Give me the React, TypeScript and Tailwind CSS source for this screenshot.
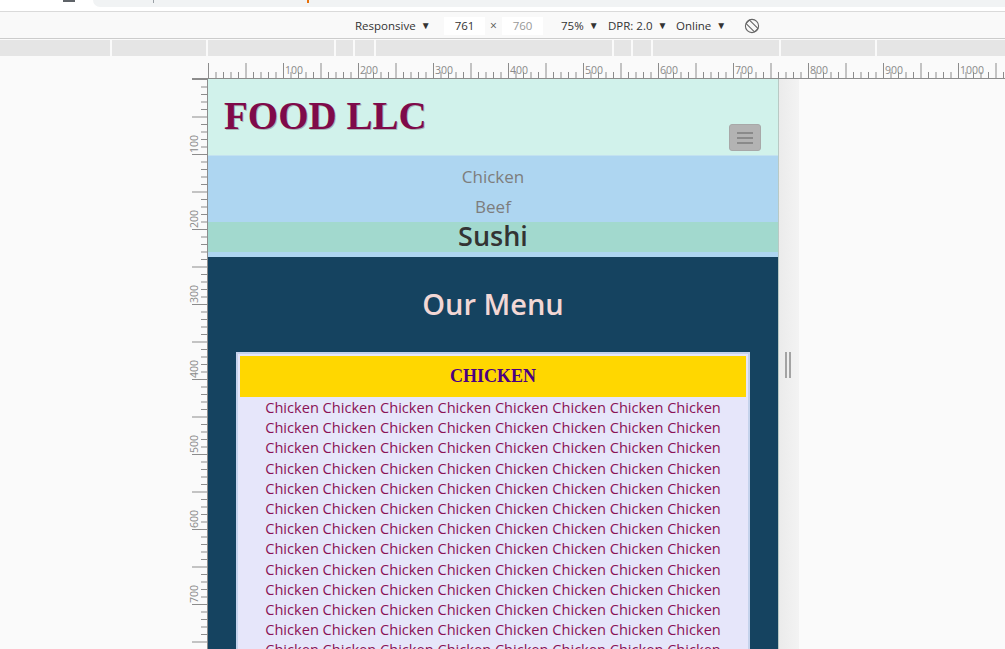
import React from "react";

const SANS = { fontFamily: '"Open Sans", "Noto Sans", sans-serif' } as const;

function HRuler() {
  const ticks: React.ReactNode[] = [];
  for (let i = 0; 208 + i * 7.5 <= 1005; i++) {
    const x = 208 + i * 7.5 + 0.5;
    const long = i % 5 === 0;
    ticks.push(
      <line key={"t" + i} x1={x} x2={x} y1={long ? 7 : 16} y2={23} stroke="#8c8c8c" strokeWidth={1} />
    );
    if (i % 10 === 0 && i > 0) {
      ticks.push(
        <text key={"l" + i} x={x + 1.5} y={18} fontSize={10.5} fill="#8a8a8a" fontFamily='"Open Sans", sans-serif'>
          {i * 10}
        </text>
      );
    }
  }
  return (
    <svg width={1005} height={23} className="block">
      <line x1={192} x2={1005} y1={22.5} y2={22.5} stroke="#8c8c8c" strokeWidth={1} />
      {ticks}
    </svg>
  );
}

function VRuler() {
  const ticks: React.ReactNode[] = [];
  for (let i = 0; i * 7.5 <= 570; i++) {
    const y = i * 7.5 + 0.5;
    const long = i % 5 === 0;
    ticks.push(
      <line key={"t" + i} x1={long ? 4 : 13} x2={20} y1={y} y2={y} stroke="#8c8c8c" strokeWidth={1} />
    );
    if (i % 10 === 0 && i > 0) {
      ticks.push(
        <text
          key={"l" + i}
          transform={`translate(10, ${y - 1.5}) rotate(-90)`}
          fontSize={10.5}
          fill="#8a8a8a"
          fontFamily='"Open Sans", sans-serif'
        >
          {i * 10}
        </text>
      );
    }
  }
  return (
    <svg width={20} height={570} className="block">
      <line x1={19.5} x2={19.5} y1={0} y2={570} stroke="#8c8c8c" strokeWidth={1} />
      {ticks}
    </svg>
  );
}

function RotateIcon() {
  return (
    <svg width={16} height={16} viewBox="0 0 16 16" fill="none" stroke="#666" strokeWidth={1.1}>
      <circle cx={8} cy={8} r={6.6} />
      <rect x={5.6} y={2} width={4.8} height={12} rx={0.8} transform="rotate(-45 8 8)" />
    </svg>
  );
}

const Arrow = () => <span className="text-[10px] ml-[5px] text-[#333] relative top-[-1px]">▼</span>;

export default function App() {
  const segs = [110, 94, 126, 17, 19, 236, 17, 18, 126, 94, 128];
  const line = Array(8).fill("Chicken").join(" ");
  return (
    <div className="w-[1005px] h-[649px] overflow-hidden bg-[#fafafa] flex flex-col" style={SANS}>
      {/* browser top strip */}
      <div className="h-[11px] bg-white flex items-start shrink-0">
        <div className="w-[63px]" />
        <div className="w-[12px] h-[2px] bg-[#5f6368]" />
        <div className="w-[18px]" />
        <div className="flex-1 h-[7px] bg-[#f1f3f4] rounded-bl-[9px] flex items-start">
          <div className="w-[60px]" />
          <div className="w-[1px] h-[3px] bg-[#9aa0a6]" />
          <div className="w-[153px]" />
          <div className="w-[2px] h-[3px] bg-[#e8710a]" />
        </div>
      </div>
      <div className="h-[1px] bg-[#dadada] shrink-0" />
      {/* device toolbar */}
      <div className="h-[26px] bg-[#f9f9f9] flex items-center pt-[2px] pl-[355px] text-[11.5px] text-[#333] shrink-0">
        <div className="w-[89px] flex items-center">
          <span>Responsive</span>
          <Arrow />
        </div>
        <div className="w-[41px] h-[18px] bg-white flex items-center justify-center">761</div>
        <div className="w-[17px] flex items-center justify-center text-[#555] text-[12px]">×</div>
        <div className="w-[41px] h-[18px] bg-white flex items-center justify-center text-[#999]">760</div>
        <div className="w-[18px]" />
        <div className="w-[47px] flex items-center">
          <span>75%</span>
          <Arrow />
        </div>
        <div className="w-[68px] flex items-center">
          <span>DPR: 2.0</span>
          <Arrow />
        </div>
        <div className="w-[68px] flex items-center">
          <span>Online</span>
          <Arrow />
        </div>
        <RotateIcon />
      </div>
      <div className="h-[1px] bg-[#cccccc] shrink-0" />
      <div className="h-[1px] bg-[#fafafa] shrink-0" />
      {/* media query bar */}
      <div className="h-[16px] flex gap-[2px] shrink-0">
        {segs.map((w, i) => (
          <div key={i} className="h-full bg-[#e5e5e5]" style={{ width: w }} />
        ))}
      </div>
      {/* horizontal ruler */}
      <div className="h-[23px] shrink-0">
        <HRuler />
      </div>
      {/* main */}
      <div className="flex h-[570px] shrink-0">
        <div className="w-[188px] shrink-0" />
        <div className="w-[20px] shrink-0">
          <VRuler />
        </div>
        {/* device page */}
        <div className="w-[571px] shrink-0 flex flex-col overflow-hidden border-r border-[#b9c9c4]">
          <header className="h-[76px] shrink-0 bg-[#d1f2eb] flex justify-between items-start">
            <div
              className="pl-[16px] pt-[17px] text-[39px] leading-[39px] font-bold text-[#7f0a4a] [text-shadow:1px_1px_0_rgba(40,0,20,0.25)]"
              style={{ fontFamily: '"Liberation Serif", "Times New Roman", serif' }}
            >
              FOOD LLC
            </div>
            <div className="mt-[45px] mr-[17px] w-[32px] h-[27px] bg-[#b3b3b3] border border-[#a8a8a8] rounded-[3px] flex flex-col items-center justify-center gap-[3px]">
              <div className="w-[16px] h-[2px] bg-[#8a8a8a]" />
              <div className="w-[16px] h-[2px] bg-[#8a8a8a]" />
              <div className="w-[16px] h-[2px] bg-[#8a8a8a]" />
            </div>
          </header>
          <nav className="shrink-0 bg-[#aed6f1] pt-[6px] pb-[5px] border-t border-[#c3e2f0] flex flex-col text-center">
            <div className="h-[30px] leading-[29px] text-[17px] text-[#7d7d7d]">Chicken</div>
            <div className="h-[30px] leading-[29px] text-[17px] text-[#7d7d7d]">Beef</div>
            <div className="h-[30px] leading-[27px] text-[27px] text-[#333333] font-semibold bg-[#a2d9ce]">Sushi</div>
          </nav>
          <section className="flex-1 bg-[#154360] flex flex-col">
            <h2 className="pt-[29px] h-[66px] text-center text-[29px] leading-[36px] font-semibold text-[#f2d7d5]">
              Our Menu
            </h2>
            <div className="mt-[29px] mx-[28px] border-2 border-[#c5d3ec] bg-[#e6e6fa] p-[2px] flex flex-col">
              <div
                className="h-[41px] bg-[#ffd700] flex items-center justify-center pb-[1px] text-[18px] font-bold text-[#4b0082]"
                style={{ fontFamily: '"Liberation Serif", "Times New Roman", serif' }}
              >
                CHICKEN
              </div>
              <div className="flex flex-col items-center text-[14.6px] leading-[20.2px] text-[#8a1256]">
                {Array.from({ length: 15 }).map((_, i) => (
                  <div key={i} className="whitespace-nowrap">
                    {line}
                  </div>
                ))}
              </div>
            </div>
          </section>
        </div>
        {/* shadow + resize handle */}
        <div className="w-[20px] shrink-0 bg-gradient-to-r from-[#ebebeb] to-[#f3f3f3] flex flex-col">
          <div className="mt-[273px] pl-[6px] flex gap-[2px]">
            <div className="w-[2px] h-[26px] bg-[#a3a3a3]" />
            <div className="w-[2px] h-[26px] bg-[#a3a3a3]" />
          </div>
        </div>
        <div className="flex-1" />
      </div>
    </div>
  );
}
